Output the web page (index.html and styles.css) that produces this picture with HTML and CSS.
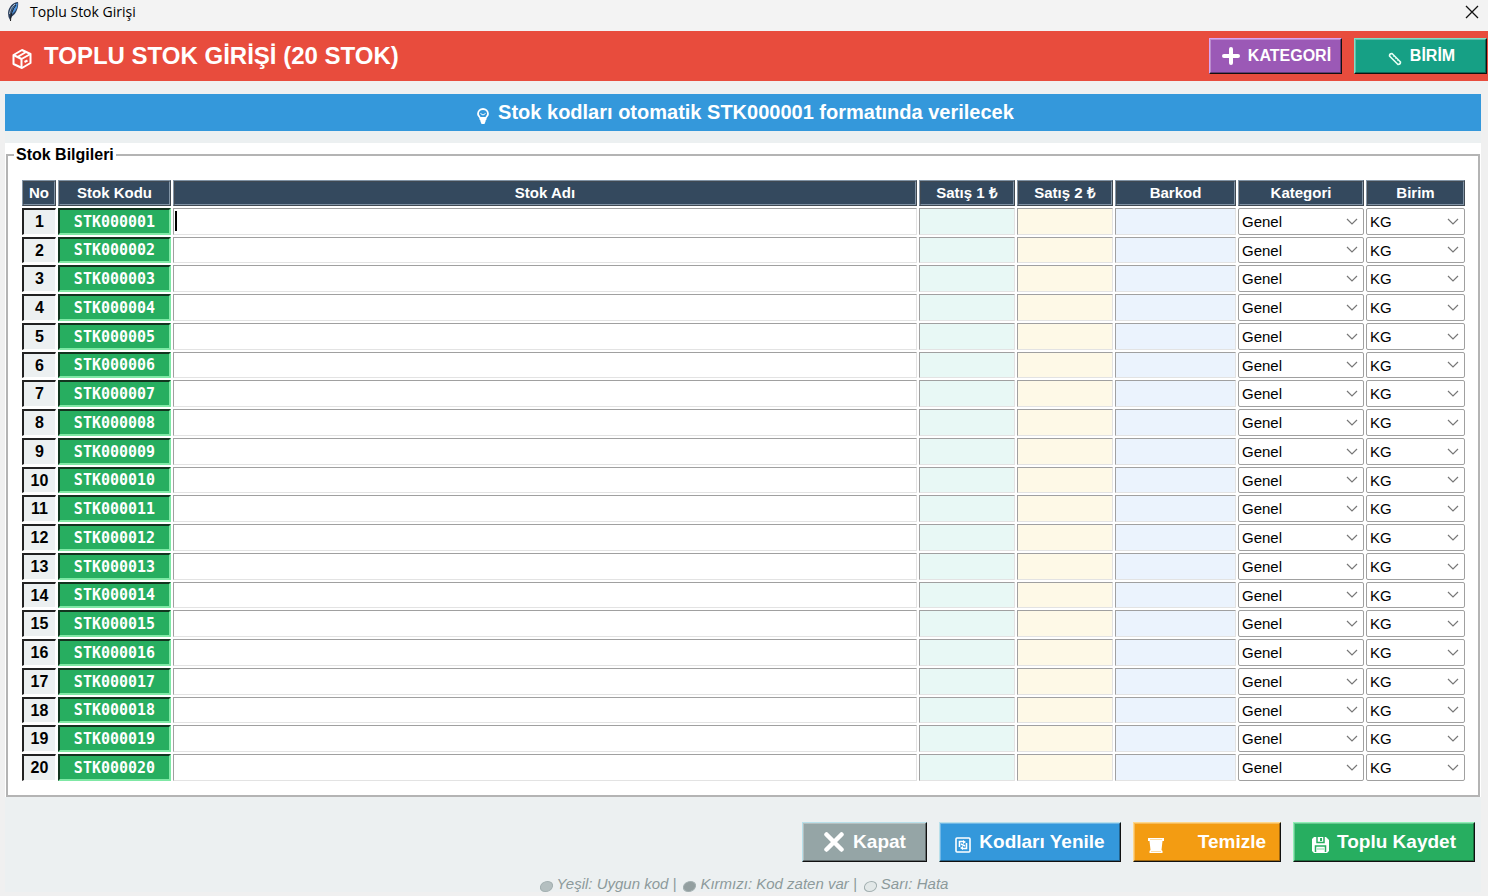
FILE: index.html
```html
<!DOCTYPE html>
<html lang="tr">
  <head>
    <meta charset="UTF-8" />
    <meta name="viewport" content="width=device-width, initial-scale=1.0" />
    <title>Toplu Stok Girişi</title>
    <link rel="stylesheet" href="styles.css">
  </head>
  <body>
    <div class="titlebar">
      <svg class="feather" width="14" height="22" viewBox="0 0 14 22">
        <path d="M12 1C7 1 2.500 6 2 12L2.500 16L4 19L6 15.500C10 13 13 6 12 1Z" fill="#2b3f5c" />
        <path d="M11.500 2C8 4 5.500 8 5 14C9 11 12 7 11.500 2Z" fill="#4d94e0" />
        <path d="M10 4C6.500 8 4.500 14 4.500 20" fill="none" stroke="#1a1a1a" />
        <path d="M9 3C5.500 6 4 9 3.500 13" fill="none" stroke="#b4c0cc" />
      </svg>
      <span class="window-title">Toplu Stok Girişi</span>
      <button class="close" aria-label="Pencereyi kapat">
        <svg width="14" height="14" viewBox="0 0 14 14">
          <path d="M1 1L13 13M13 1L1 13" stroke="#111" stroke-width="1.300" />
        </svg>
      </button>
    </div>

    <div class="header">
      <svg class="box-icon" width="20" height="22" viewBox="0 0 20 22" fill="none" stroke="#fff" stroke-width="2" stroke-linejoin="round">
        <path d="M1.500 7L10 2L18.500 6V15L10 20L1.500 16Z" />
        <path d="M1.500 7L9.500 11L18.500 6M9.500 11V20M5.500 9L14 4M12.500 14L15.500 12.500" />
      </svg>
      <h1>TOPLU STOK GİRİŞİ (20 STOK)</h1>
      <button class="btn small purple">
        <svg width="18" height="18" viewBox="0 0 18 18">
          <path d="M9 2V16M2 9H16" stroke="#fff" stroke-width="4" stroke-linecap="round" />
        </svg>
        KATEGORİ
      </button>
      <button class="btn small teal">
        <svg class="low" width="14" height="14" viewBox="0 0 14 14" fill="none" stroke="#e8fff4">
          <path d="M1.500 4Q1.500 1.500 4 1.500L12.500 10Q12.500 12.500 10 12.500Z" stroke-width="1.600" stroke-linejoin="round" />
          <path d="M5 5L6 4M7 7L8 6M9 9L10 8" stroke-opacity="0.6" />
        </svg>
        BİRİM
      </button>
    </div>

    <div class="content">
      <div class="banner">
        <svg class="low" width="14" height="18" viewBox="0 0 14 18">
          <path d="M7 2A5 5 0 0 1 12 7C12 9 9.500 10 9.500 12H4.500C4.500 10 2 9 2 7A5 5 0 0 1 7 2Z" fill="none" stroke="#fff" stroke-width="1.800" />
          <path d="M4.500 6.500L7 8L9.500 6.500" fill="none" stroke="#fff" />
          <path d="M3.500 10H10.500L9.500 14.500L8.500 17H5.500L4.500 14.500Z" fill="#fff" />
        </svg>
        Stok kodları otomatik STK000001 formatında verilecek
      </div>

      <div class="panel">
        <fieldset>
          <legend>Stok Bilgileri</legend>
          <table>
            <colgroup>
              <col class="col-no" />
              <col class="col-code" />
              <col />
              <col class="col-price" />
              <col class="col-price" />
              <col class="col-barcode" />
              <col class="col-category" />
              <col class="col-unit" />
            </colgroup>
            <thead>
              <tr>
                <th>No</th>
                <th>Stok Kodu</th>
                <th>Stok Adı</th>
                <th>Satış 1 ₺</th>
                <th>Satış 2 ₺</th>
                <th>Barkod</th>
                <th>Kategori</th>
                <th>Birim</th>
              </tr>
            </thead>
            <tbody id="rows"></tbody>
          </table>
        </fieldset>
      </div>

      <div class="actions">
        <button class="btn gray">
          <svg width="22" height="20" viewBox="0 0 22 20">
            <path d="M3.500 2.500L18.500 17.500M18.500 2.500L3.500 17.500" stroke="#fff" stroke-width="4.500" stroke-linecap="round" />
          </svg>
          Kapat
        </button>
        <button class="btn blue">
          <svg class="low" width="16" height="16" viewBox="0 0 16 16" fill="none" stroke="#fff">
            <rect x="1" y="1" width="14" height="14" rx="1" stroke-width="1.600" />
            <path d="M4.500 10V4.500H9M11.500 6V11.500H7" stroke-width="1.600" />
            <path d="M8 3L11 5L8 7ZM8 9L5 11L8 13Z" fill="#fff" stroke="none" />
            <path d="M6 7L10 9" stroke-width="1.500" />
          </svg>
          Kodları Yenile
        </button>
        <button class="btn orange">
          <svg class="low" width="16" height="16" viewBox="0 0 16 16" fill="#fff">
            <path d="M0 1H16V4H14.500L13.500 13L14.500 14V16H1.500V14L2.500 13L1.500 4H0Z" />
            <path d="M2 2.500H14M3 14.500H13" stroke="#fbdca6" />
          </svg>
          Temizle
        </button>
        <button class="btn green">
          <svg class="low" width="17" height="16" viewBox="0 0 17 16">
            <path d="M2 0H14L17 3V14L15 16H2L0 14V2Z" fill="#fff" />
            <path d="M5 0V5.500H12V0M3.500 15V9H13.500V15" fill="none" stroke="#27ae60" stroke-width="1.500" />
            <path d="M8 1H10V4H8Z" fill="#27ae60" />
            <path d="M5 12H12" stroke="#8fd6ac" />
          </svg>
          Toplu Kaydet
        </button>
      </div>

      <div class="legend-line">
        <span class="status"><i class="dot green-dot"></i>Yeşil: Uygun kod |</span>
        <span class="status"><i class="dot red-dot"></i>Kırmızı: Kod zaten var |</span>
        <span class="status"><i class="dot yellow-dot"></i>Sarı: Hata</span>
      </div>
    </div>

    <script src="script.js"></script>
  </body>
</html>
```
FILE: styles.css
```css
* {
  box-sizing: border-box;
}
body {
  margin: 0;
  min-height: 100vh;
  background-color: #f0f0f0;
  color: black;
  font-family: "Liberation Sans", Arial, sans-serif;
}
button,
input,
select {
  font-family: inherit;
}

/* Window title */
.titlebar {
  display: flex;
  align-items: center;
  height: 31px;
  padding: 0 8px 8px 6px;
  background-color: #f3f3f3;
}
.window-title {
  margin-left: 10px;
  font-family: "Open Sans", "Segoe UI", sans-serif;
  font-size: 14px;
}
.close {
  display: flex;
  margin-left: auto;
  padding: 1px;
  border: none;
  background: none;
}

/* Header */
.header {
  display: flex;
  align-items: center;
  gap: 12px;
  height: 50px;
  padding: 0 1px 0 12px;
  background-color: #e84c3d;
  color: white;
}
.header h1 {
  margin: 0 auto 0 0;
  font-size: 24px;
  line-height: 50px;
}
.box-icon {
  margin-top: 6px;
}

/* Raised buttons */
.btn {
  display: flex;
  align-items: center;
  justify-content: center;
  gap: 8px;
  height: 40px;
  padding: 0;
  border: 1px solid;
  border-color: #b8e0ea #111 #111 #b8e0ea;
  box-shadow: inset -1px -1px rgba(0, 0, 0, 0.35), inset 1px 1px rgba(255, 255, 255, 0.3);
  color: white;
  font-size: 19px;
  font-weight: bold;
  cursor: pointer;
}
.btn.small {
  width: 133px;
  height: 36px;
  padding-left: 2px;
  font-size: 16px;
}
.low {
  margin-top: 6px;
}
.purple {
  background-color: #9b59b6;
  border-color: #d9a5f5 #111 #111 #d9a5f5;
}
.teal {
  background-color: #16a085;
  border-color: #7fe0c8 #111 #111 #7fe0c8;
}
.gray {
  width: 125px;
  background-color: #95a5a6;
}
.blue {
  width: 182px;
  background-color: #3498db;
}
.orange {
  width: 148px;
  gap: 34px;
  background-color: #f39c12;
  border-color: #ffd88a #111 #111 #ffd88a;
}
.green {
  width: 182px;
  background-color: #27ae60;
  border-color: #8ff0b5 #111 #111 #8ff0b5;
}

.content {
  margin: 13px 7px 4px 5px;
  background-color: #ecf0f1;
}
.banner {
  display: flex;
  align-items: center;
  justify-content: center;
  gap: 8px;
  height: 37px;
  padding-left: 4px;
  background-color: #3498db;
  color: white;
  font-size: 20px;
  font-weight: bold;
}

/* Stock table */
.panel {
  margin-top: 12px;
  padding: 0 1px;
  background-color: white;
}
fieldset {
  min-width: 0;
  margin: 0;
  padding: 11px 11px 12px 12px;
  border: 2px solid #b4b4b4;
}
legend {
  margin-left: -6px;
  padding: 0 2px;
  font-size: 16px;
  font-weight: bold;
  line-height: 24px;
}
table {
  width: 100%;
  table-layout: fixed;
  border-collapse: separate;
  border-spacing: 2px;
}
.col-no {
  width: 34px;
}
.col-code {
  width: 113px;
}
.col-price {
  width: 96px;
}
.col-barcode {
  width: 121px;
}
.col-category {
  width: 126px;
}
.col-unit {
  width: 99px;
}
tr {
  height: 27px;
}
thead tr,
tbody tr:nth-child(4n + 2) {
  height: 26px;
}
th,
td {
  padding: 0;
}
thead th {
  border: 2px ridge #8294a6;
  background-color: #34495e;
  color: white;
  font-size: 15px;
  line-height: 20px;
}
td {
  position: relative;
  border: 1px solid;
  border-color: #a0a0a0 #e3e3e3 #e3e3e3 #a0a0a0;
}
td input,
td select {
  display: block;
  width: 100%;
  height: 22px;
  margin: 0;
  padding: 0 4px;
  border: none;
  outline: none;
  background-color: transparent;
  font-size: 15px;
}
.no {
  border-width: 2px 1px 1px 2px;
  border-color: #222 white white #222;
  background-color: #ecf0f1;
  font-size: 16px;
  font-weight: bold;
  text-align: center;
}
.code {
  border-width: 2px;
  border-color: #12351f #7fe8a5 #7fe8a5 #12351f;
  background-color: #27ae60;
}
.code input {
  padding: 0;
  color: white;
  font-family: "DejaVu Sans Mono", Consolas, monospace;
  font-size: 15px;
  font-weight: bold;
  text-align: center;
}
.price1 {
  background-color: #e8f8f5;
}
.price2 {
  background-color: #fef9e7;
}
.barcode {
  background-color: #ebf3fd;
}
.combo {
  border-color: #a0a0a0;
  border-radius: 2px;
}
.combo select {
  padding: 0 3px;
  appearance: none;
  background: url("data:image/svg+xml,%3Csvg xmlns='http://www.w3.org/2000/svg' width='12' height='8'%3E%3Cpath d='M1 1L6 6L11 1' fill='none' stroke='%23777' stroke-width='1.2'/%3E%3C/svg%3E") no-repeat right 5px center;
}
/* Insertion point in the first name field */
.cursor {
  position: absolute;
  top: 2px;
  left: 1px;
  width: 2px;
  height: 20px;
  background-color: black;
}

/* Bottom */
.actions {
  display: flex;
  justify-content: flex-end;
  gap: 12px;
  padding: 25px 6px 0 0;
}
.legend-line {
  display: flex;
  justify-content: center;
  gap: 7px;
  padding: 14px 0 0 2px;
  color: #8c9a9b;
  font-size: 15px;
  font-style: italic;
  line-height: 16px;
}
.status {
  display: flex;
  align-items: center;
  gap: 4px;
}
.dot {
  width: 13px;
  height: 11px;
  margin-top: 4px;
  border: 1px solid #a3b0b1;
  border-radius: 50%;
  transform: skewX(-12deg);
}
.green-dot {
  background-color: #b4bfc0;
}
.red-dot {
  background-color: #939fa0;
}
.yellow-dot {
  background-color: #e2e8e8;
}
```
FILE: script.js
```js
const rows = document.getElementById("rows");

for (let i = 1; i <= 20; i++) {
  const code = "STK" + String(i).padStart(6, "0");
  const row = document.createElement("tr");
  row.innerHTML = `
    <td class="no">${i}</td>
    <td class="code"><input type="text" value="${code}" aria-label="Stok Kodu ${i}" readonly /></td>
    <td class="name"><input type="text" aria-label="Stok Adı ${i}" /></td>
    <td class="price1"><input type="text" aria-label="Satış 1 - ${i}" /></td>
    <td class="price2"><input type="text" aria-label="Satış 2 - ${i}" /></td>
    <td class="barcode"><input type="text" aria-label="Barkod ${i}" /></td>
    <td class="combo"><select aria-label="Kategori ${i}"><option>Genel</option></select></td>
    <td class="combo"><select aria-label="Birim ${i}"><option>KG</option></select></td>`;
  rows.appendChild(row);
}

// Show the insertion point in the first empty name field
const cursor = document.createElement("span");
cursor.className = "cursor";
const firstName = rows.querySelector(".name");
firstName.appendChild(cursor);
firstName.querySelector("input").addEventListener("focus", () => cursor.remove());
```
